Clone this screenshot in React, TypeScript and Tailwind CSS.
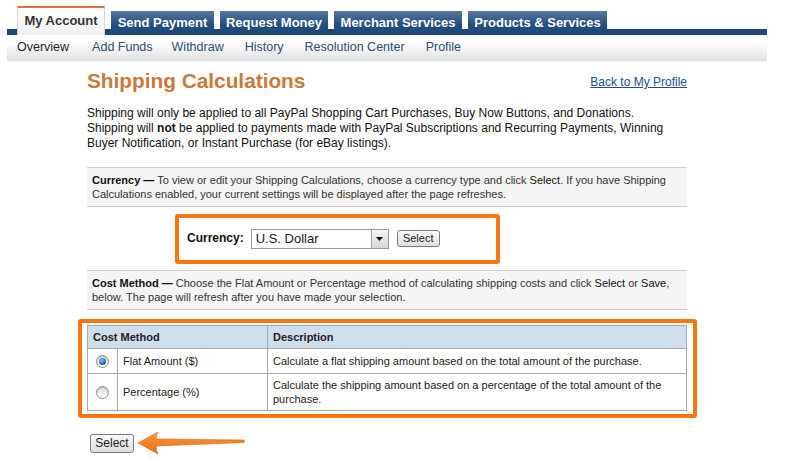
const tabs = [
  { label: "Send Payment", w: "w-[103px]" },
  { label: "Request Money", w: "w-[108px]" },
  { label: "Merchant Services", w: "w-[128px]" },
  { label: "Products & Services", w: "w-[139px]" },
];

const subnav = [
  { label: "Add Funds", cls: "mr-[-2px]" },
  { label: "Withdraw", cls: "" },
  { label: "History", cls: "" },
  { label: "Resolution Center", cls: "" },
  { label: "Profile", cls: "" },
];

function Radio({ checked }: { checked?: boolean }) {
  return (
    <span className="inline-flex w-[13px] h-[13px] rounded-full border border-[#8e8f8f] bg-[linear-gradient(#dcdcdc,#fafafa)] items-center justify-center shadow-[inset_0_1px_1px_rgba(0,0,0,0.15)]">
      {checked && (
        <span className="w-[7px] h-[7px] rounded-full bg-[radial-gradient(circle_at_40%_35%,#7fc0ef,#1c5f9e_70%)]" />
      )}
    </span>
  );
}

export default function App() {
  return (
    <div className="w-[797px] h-[460px] bg-white overflow-hidden font-['Liberation_Sans',Arial,sans-serif] text-black">
      {/* Top tabs */}
      <div className="mx-[7px] w-[760px] pt-[6px]">
        <div className="flex items-end gap-[6px] pl-[10px] h-[29px] bg-[linear-gradient(to_bottom,transparent_23px,#1c4777_23px)]">
          <div className="w-[88px] h-[29px] border-t-2 border-t-[#e2703a] border-x border-x-[#d6d6d6] bg-[linear-gradient(#ffffff,#f0f0f0)] text-center text-[13px] font-bold text-[#333] leading-[15px] pt-[5px]">
            My Account
          </div>
          {tabs.map((t) => (
            <div
              key={t.label}
              className={`${t.w} h-[24px] bg-[linear-gradient(#58799f,#24507f_55%,#1c4777)] text-center text-[13px] font-bold text-white leading-[24px]`}
            >
              {t.label}
            </div>
          ))}
        </div>

        {/* Sub navigation */}
        <div className="h-[25px] flex items-center gap-[21px] pl-[10px] bg-[linear-gradient(#ffffff,#ffffff_30%,#e3e3e3)] text-[12.5px]">
          <span className="text-[#1f1f1f] mr-[2px]">Overview</span>
          {subnav.map((s) => (
            <span key={s.label} className={`text-[#2f4b76] ${s.cls}`}>
              {s.label}
            </span>
          ))}
        </div>
        <div className="h-[2px] bg-[linear-gradient(#d9e1ea,#f3f6f9)]" />
      </div>

      {/* Content */}
      <div className="ml-[87px] w-[600px]">
        <div className="mt-[7px] flex items-end justify-between">
          <h1 className="text-[20.8px] leading-[24px] font-bold text-[#c97a3b]">Shipping Calculations</h1>
          <a className="text-[12px] leading-[15px] text-[#1d4f8f] underline mb-[3px]">Back to My Profile</a>
        </div>

        <div className="mt-[13px] text-[12px] leading-[15px] text-[#111]">
          <div>Shipping will only be applied to all PayPal Shopping Cart Purchases, Buy Now Buttons, and Donations.</div>
          <div>
            Shipping will <b>not</b> be applied to payments made with PayPal Subscriptions and Recurring Payments, Winning
          </div>
          <div>Buyer Notification, or Instant Purchase (for eBay listings).</div>
        </div>

        <div className="mt-[16px] border-y border-[#cccccc] bg-[#f5f5f5] px-[5px] py-[5px] text-[11px] leading-[14px] text-[#333]">
          <div>
            <b className="text-[#111]">Currency —</b> To view or edit your Shipping Calculations, choose a currency type and click{" "}
            <span className="text-[#111]">Select</span>. If you have Shipping
          </div>
          <div>Calculations enabled, your current settings will be displayed after the page refreshes.</div>
        </div>

        <div className="mt-[7px] ml-[88px] w-[325px] h-[50px] border-4 border-[#f7760f] rounded-[3px] flex items-start pl-[8px] pt-[11px]">
          <span className="text-[12px] font-bold text-[#111] mt-[2px] leading-[15px]">Currency:</span>
          <div className="ml-[7px] w-[138px] h-[20px] border border-[#9a9a9a] bg-white flex items-center">
            <span className="flex-1 pl-[4px] text-[13px] leading-[18px] text-[#2a1030]">U.S. Dollar</span>
            <span className="w-[17px] h-[18px] border-l border-[#a5a5a5] bg-[linear-gradient(#f6f6f6,#d6d6d6)] flex items-center justify-center">
              <svg width="7" height="4" viewBox="0 0 7 4">
                <path d="M0 0h7L3.5 4z" fill="#111" />
              </svg>
            </span>
          </div>
          <button className="ml-[8px] mt-[1px] w-[43px] h-[17px] border border-[#7a7a7a] rounded-[3px] bg-[linear-gradient(#fbfbfb,#dedede)] text-[11px] leading-[15px] text-[#222]">
            Select
          </button>
        </div>

        <div className="mt-[6px] border-y border-[#cccccc] bg-[#f5f5f5] px-[5px] py-[5px] text-[11px] leading-[14px] text-[#333]">
          <div>
            <b className="text-[#111]">Cost Method —</b> Choose the Flat Amount or Percentage method of calculating shipping costs and click{" "}
            <span className="text-[#111]">Select</span> or <span className="text-[#111]">Save</span>,
          </div>
          <div>below. The page will refresh after you have made your selection.</div>
        </div>

        <div className="mt-[9px] -mx-[9px] w-[619px] border-4 border-[#f7760f] rounded-[3px] px-[5px] pt-[2px] pb-[3px]">
          <table className="w-[600px] border-collapse text-[11px] text-[#222]">
            <thead>
              <tr className="h-[23px] bg-[#cedeec]">
                <th colSpan={2} className="border border-[#aaaaaa] text-left font-bold pl-[5px]">
                  Cost Method
                </th>
                <th className="border border-[#aaaaaa] text-left font-bold pl-[5px]">Description</th>
              </tr>
            </thead>
            <tbody>
              <tr className="h-[25px]">
                <td className="w-[30px] border border-[#aaaaaa] text-center align-middle">
                  <span className="inline-flex align-middle"><Radio checked /></span>
                </td>
                <td className="w-[150px] border border-[#aaaaaa] pl-[5px]">Flat Amount ($)</td>
                <td className="border border-[#aaaaaa] pl-[5px]">Calculate a flat shipping amount based on the total amount of the purchase.</td>
              </tr>
              <tr className="h-[37px]">
                <td className="border border-[#aaaaaa] text-center align-middle">
                  <span className="inline-flex align-middle"><Radio /></span>
                </td>
                <td className="border border-[#aaaaaa] pl-[5px]">Percentage (%)</td>
                <td className="border border-[#aaaaaa] pl-[5px] leading-[14px]">
                  <div>Calculate the shipping amount based on a percentage of the total amount of the</div>
                  <div>purchase.</div>
                </td>
              </tr>
            </tbody>
          </table>
        </div>

        <div className="mt-[12px] flex items-center">
          <button className="ml-[3px] w-[44px] h-[19px] border border-[#7a7a7a] rounded-[3px] bg-[linear-gradient(#fbfbfb,#dcdcdc)] text-[12px] leading-[15px] text-[#222]">
            Select
          </button>
          <svg className="ml-[3px]" width="110" height="26" viewBox="0 0 110 26">
            <defs>
              <linearGradient id="arw" x1="0" y1="0" x2="0" y2="1">
                <stop offset="0" stopColor="#ff9a3c" />
                <stop offset="1" stopColor="#e86a10" />
              </linearGradient>
            </defs>
            <path
              d="M1 13 Q12 7 21 2 Q19 6 19 9 L107 10 Q108 11 107 12.5 L19 16 Q19 20 21 24 Q12 19 1 13 Z"
              fill="url(#arw)"
              stroke="#d9640e"
              strokeWidth="0.6"
            />
          </svg>
        </div>
      </div>
    </div>
  );
}
